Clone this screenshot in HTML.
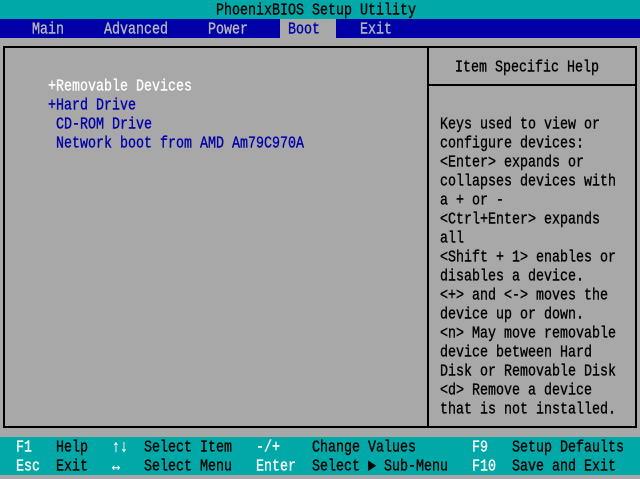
<!DOCTYPE html>
<html><head><meta charset="utf-8"><style>
html,body{margin:0;padding:0;}
body{width:640px;height:475px;background:#a8a8a8;position:relative;overflow:hidden;font-family:"Liberation Mono",monospace;font-size:13.33px;}
.t{position:absolute;height:19px;line-height:19px;white-space:pre;transform:translateY(2px) scaleY(1.25);transform-origin:50% 55%;-webkit-text-stroke:0.3px currentColor;}
.bar{position:absolute;left:0;width:640px;}
.l{position:absolute;background:#000;}
.w{color:#fcfcfc}.k{color:#000}.b{color:#0000a8}.g{color:#b8b8b8}
</style></head><body>
<div class="bar" style="top:0;height:19px;background:#00a8a8"></div>
<div class="bar" style="top:19px;height:19px;background:#0000a8"></div>
<div style="position:absolute;left:280px;top:19px;width:56px;height:19px;background:#a8a8a8"></div>
<div class="bar" style="top:437px;height:38px;background:#00a8a8"></div>

<div class="l" style="left:3px;top:46px;width:634px;height:2px"></div>
<div class="l" style="left:3px;top:426px;width:634px;height:2px"></div>
<div class="l" style="left:3px;top:46px;width:2px;height:382px"></div>
<div class="l" style="left:635px;top:46px;width:2px;height:382px"></div>
<div class="l" style="left:427px;top:46px;width:2px;height:382px"></div>
<div class="l" style="left:427px;top:84px;width:210px;height:2px"></div>

<div class="t k" style="left:216px;top:0">PhoenixBIOS Setup Utility</div>
<div class="t g" style="left:32px;top:19px">Main</div>
<div class="t g" style="left:104px;top:19px">Advanced</div>
<div class="t g" style="left:208px;top:19px">Power</div>
<div class="t b" style="left:288px;top:19px">Boot</div>
<div class="t g" style="left:360px;top:19px">Exit</div>

<div class="t k" style="left:455px;top:57px">Item Specific Help</div>

<div class="t w" style="left:48px;top:76px">+Removable Devices</div>
<div class="t b" style="left:48px;top:95px">+Hard Drive</div>
<div class="t b" style="left:56px;top:114px">CD-ROM Drive</div>
<div class="t b" style="left:56px;top:133px">Network boot from AMD Am79C970A</div>

<div class="t k" style="left:440px;top:114px">Keys used to view or</div>
<div class="t k" style="left:440px;top:133px">configure devices:</div>
<div class="t k" style="left:440px;top:152px">&lt;Enter&gt; expands or</div>
<div class="t k" style="left:440px;top:171px">collapses devices with</div>
<div class="t k" style="left:440px;top:190px">a + or -</div>
<div class="t k" style="left:440px;top:209px">&lt;Ctrl+Enter&gt; expands</div>
<div class="t k" style="left:440px;top:228px">all</div>
<div class="t k" style="left:440px;top:247px">&lt;Shift + 1&gt; enables or</div>
<div class="t k" style="left:440px;top:266px">disables a device.</div>
<div class="t k" style="left:440px;top:285px">&lt;+&gt; and &lt;-&gt; moves the</div>
<div class="t k" style="left:440px;top:304px">device up or down.</div>
<div class="t k" style="left:440px;top:323px">&lt;n&gt; May move removable</div>
<div class="t k" style="left:440px;top:342px">device between Hard</div>
<div class="t k" style="left:440px;top:361px">Disk or Removable Disk</div>
<div class="t k" style="left:440px;top:380px">&lt;d&gt; Remove a device</div>
<div class="t k" style="left:440px;top:399px">that is not installed.</div>

<div class="t w" style="left:16px;top:437px">F1</div>
<div class="t k" style="left:56px;top:437px">Help</div>
<div class="t w" style="left:112px;top:437px">↑↓</div>
<div class="t k" style="left:144px;top:437px">Select Item</div>
<div class="t w" style="left:256px;top:437px">-/+</div>
<div class="t k" style="left:312px;top:437px">Change Values</div>
<div class="t w" style="left:472px;top:437px">F9</div>
<div class="t k" style="left:512px;top:437px">Setup Defaults</div>

<div class="t w" style="left:16px;top:456px">Esc</div>
<div class="t k" style="left:56px;top:456px">Exit</div>
<div class="t w" style="left:112px;top:456px">↔</div>
<div class="t k" style="left:144px;top:456px">Select Menu</div>
<div class="t w" style="left:256px;top:456px">Enter</div>
<div class="t k" style="left:312px;top:456px">Select ► Sub-Menu</div>
<div class="t w" style="left:472px;top:456px">F10</div>
<div class="t k" style="left:512px;top:456px">Save and Exit</div>
</body></html>
